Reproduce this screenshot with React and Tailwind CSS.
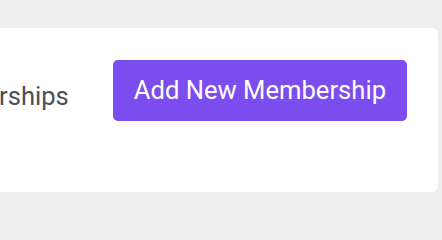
export default function App() {
  return (
    <div className="h-[240px] w-[442px] overflow-hidden bg-[#eeeeee] pt-[28px] font-['Roboto',sans-serif]">
      <div className="-ml-[200px] mr-[4px] h-[164px] rounded-md bg-white pr-[31px] pt-[32px]">
        <div className="flex items-center justify-end gap-[44px]">
          <h2 className="pt-[13px] text-[25.6px] leading-none text-[#4a4f56]">Manage Memberships</h2>
          <button className="h-[61px] rounded-[5px] bg-[#7c4dee] px-[21px] text-[25.6px] text-white">
            Add New Membership
          </button>
        </div>
      </div>
    </div>
  );
}
